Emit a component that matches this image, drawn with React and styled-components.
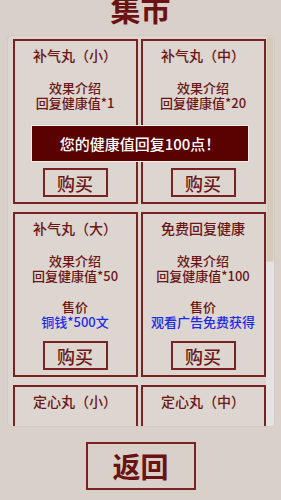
import styled, { createGlobalStyle } from 'styled-components';

const GlobalStyle = createGlobalStyle`
  html, body {
    margin: 0;
    padding: 0;
    background: #d9d0c9;
  }
  body {
    font-family: 'Noto Sans CJK SC', 'Noto Sans', sans-serif;
    color: #6b1616;
  }
`;

const Page = styled.div`
  position: relative;
  width: 281px;
  height: 500px;
  overflow: hidden;
  display: flex;
  flex-direction: column;
  align-items: center;
`;

const Title = styled.h1`
  margin: -10px 0 0;
  height: 46px;
  line-height: 36px;
  font-size: 30px;
  font-weight: 700;
  color: #6b1212;
`;

const Panel = styled.div`
  width: 266px;
  height: 390px;
  display: flex;
  background: #ddd5cf;
  border-radius: 4px;
  box-shadow: 0 0 0 1px #d2c9c2;
  overflow: hidden;
`;

const Viewport = styled.div`
  flex: 1;
  overflow: hidden;
  padding: 3px 0 0 5px;
`;

const ScrollTrack = styled.div`
  width: 8px;
  background: #e4e3e1;
  display: flex;
  flex-direction: column;
`;

const ScrollThumb = styled.div`
  height: 226px;
  background: #d4cab7;
  border-radius: 2px;
  box-shadow: inset 0 0 0 1px #dcd4c4;
`;

const Grid = styled.div`
  display: grid;
  grid-template-columns: 125px 125px;
  column-gap: 3px;
  row-gap: 8px;
`;

const Card = styled.div`
  height: 165px;
  box-sizing: border-box;
  border: 2px solid #7a2222;
  display: flex;
  flex-direction: column;
  align-items: center;
  padding-top: 4px;
`;

const CardTitle = styled.div`
  font-size: 14px;
  font-weight: 500;
  line-height: 20px;
  color: #6b1616;
`;

const Block = styled.div`
  margin-top: ${(p) => p.$gap}px;
  display: flex;
  flex-direction: column;
  align-items: center;
`;

const Line = styled.div`
  font-size: 13px;
  line-height: 15px;
  font-weight: 500;
  white-space: nowrap;
  color: ${(p) => (p.$blue ? '#1c2ae8' : '#6b1616')};
`;

const BuyButton = styled.button`
  margin-top: 12px;
  width: 65px;
  height: 29px;
  box-sizing: border-box;
  border: 2px solid #7a2222;
  background: transparent;
  font-family: inherit;
  font-size: 18px;
  line-height: 22px;
  font-weight: 500;
  color: #6b1616;
  padding: 0;
`;

const BackButton = styled.button`
  margin-top: 16px;
  width: 110px;
  height: 48px;
  box-sizing: border-box;
  border: 2px solid #7a2222;
  background: transparent;
  font-family: inherit;
  font-size: 28px;
  font-weight: 700;
  color: #6b1212;
  padding: 0;
`;

const Toast = styled.div`
  position: absolute;
  top: 125px;
  left: 31px;
  width: 218px;
  height: 37px;
  box-sizing: border-box;
  background: #5a0202;
  border: 1px solid #f2ebe6;
  color: #ffffff;
  font-size: 15px;
  font-weight: 500;
  display: flex;
  align-items: center;
  justify-content: center;
`;

const items = [
  { name: '补气丸（小）', effect: '回复健康值*1', price: '铜钱*10文' },
  { name: '补气丸（中）', effect: '回复健康值*20', price: '铜钱*200文' },
  { name: '补气丸（大）', effect: '回复健康值*50', price: '铜钱*500文' },
  { name: '免费回复健康', effect: '回复健康值*100', price: '观看广告免费获得' },
  { name: '定心丸（小）', effect: '回复心情值*1', price: '铜钱*10文' },
  { name: '定心丸（中）', effect: '回复心情值*20', price: '铜钱*200文' },
  { name: '定心丸（大）', effect: '回复心情值*50', price: '铜钱*500文' },
  { name: '免费回复心情', effect: '回复心情值*100', price: '观看广告免费获得' },
];

const ItemCard = ({ item }) => (
  <Card>
    <CardTitle>{item.name}</CardTitle>
    <Block $gap={15}>
      <Line>效果介绍</Line>
      <Line>{item.effect}</Line>
    </Block>
    <Block $gap={16}>
      <Line>售价</Line>
      <Line $blue>{item.price}</Line>
    </Block>
    <BuyButton>购买</BuyButton>
  </Card>
);

export default function App() {
  return (
    <Page>
      <GlobalStyle />
      <Title>集市</Title>
      <Panel>
        <Viewport>
          <Grid>
            {items.map((item) => (
              <ItemCard key={item.name} item={item} />
            ))}
          </Grid>
        </Viewport>
        <ScrollTrack>
          <ScrollThumb />
        </ScrollTrack>
      </Panel>
      <BackButton>返回</BackButton>
      <Toast>您的健康值回复100点！</Toast>
    </Page>
  );
}
